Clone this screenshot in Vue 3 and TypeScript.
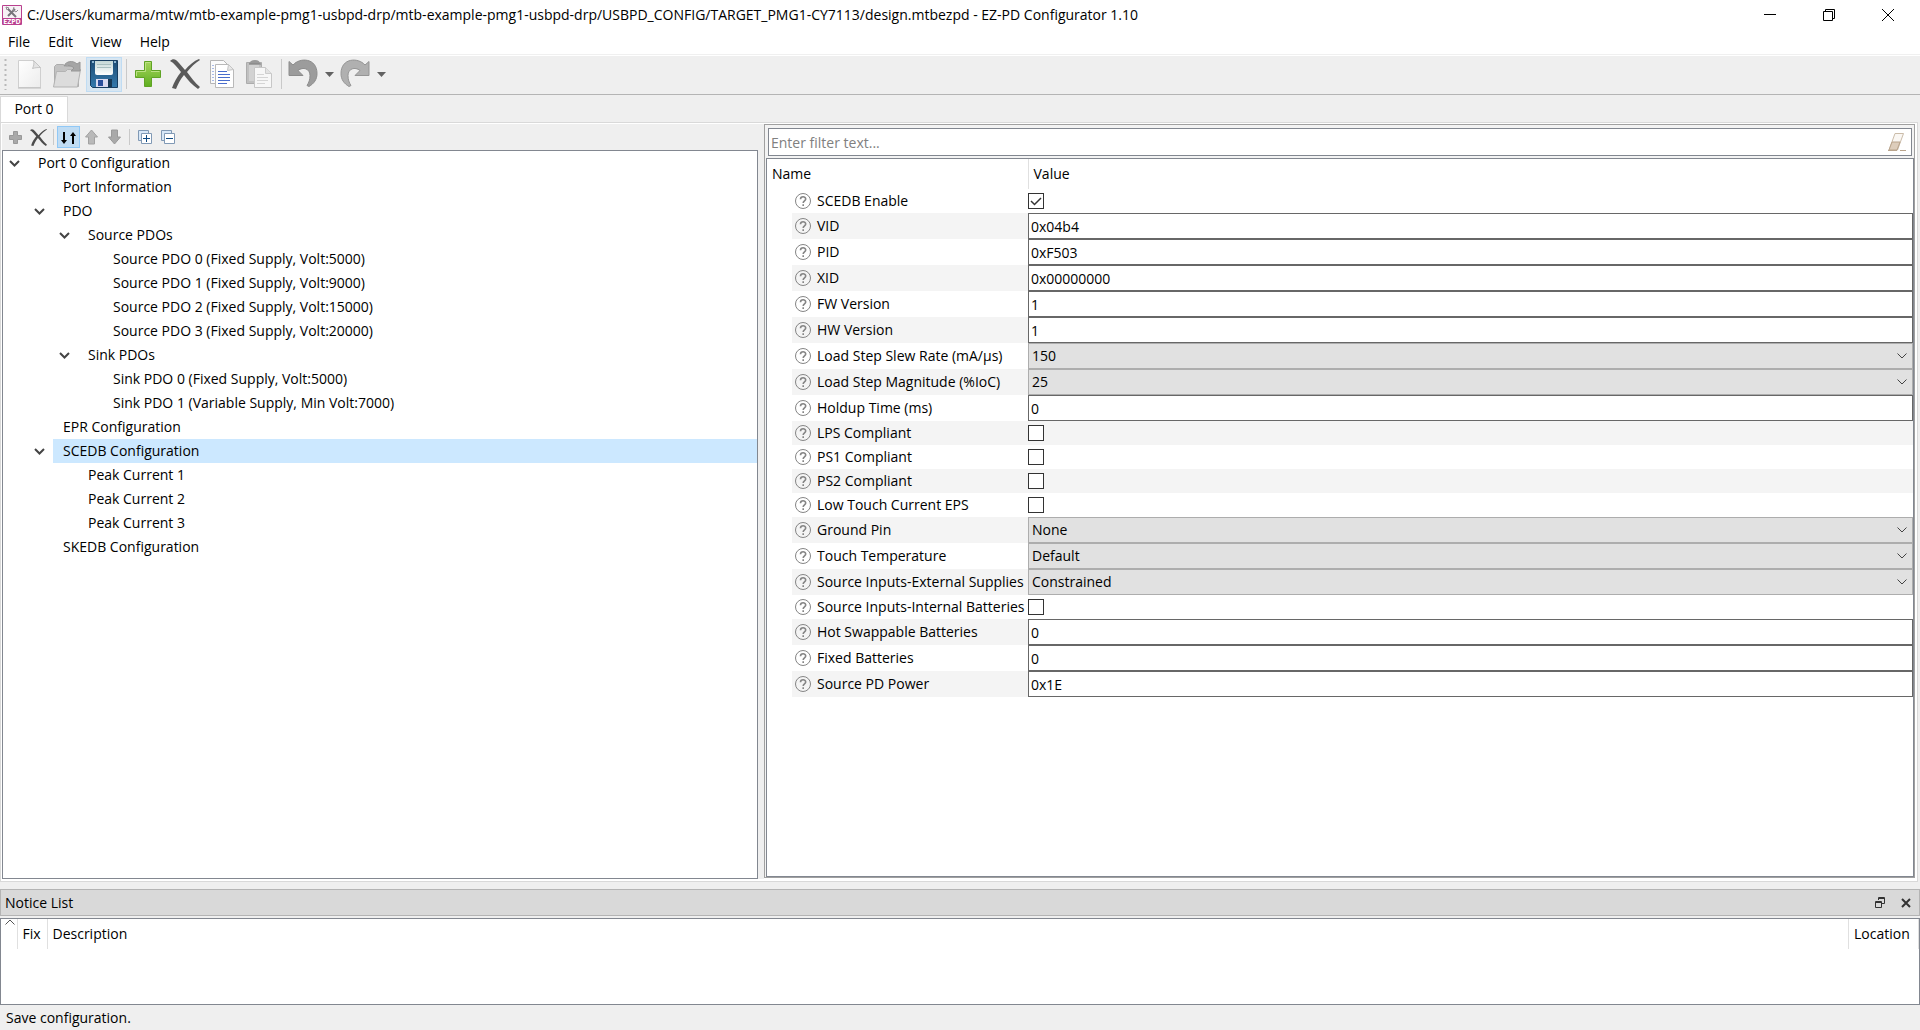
<script setup lang="ts">
import { ref } from 'vue'

interface TreeNode {
  label: string
  level: number
  open?: boolean
}

interface Field {
  id: string
  label: string
  kind: 'text' | 'select' | 'check'
  value: string | boolean
}

const menus = ['File', 'Edit', 'View', 'Help']

const nodes: TreeNode[] = [
  { label: 'Port 0 Configuration', level: 0, open: true },
  { label: 'Port Information', level: 1 },
  { label: 'PDO', level: 1, open: true },
  { label: 'Source PDOs', level: 2, open: true },
  { label: 'Source PDO 0 (Fixed Supply, Volt:5000)', level: 3 },
  { label: 'Source PDO 1 (Fixed Supply, Volt:9000)', level: 3 },
  { label: 'Source PDO 2 (Fixed Supply, Volt:15000)', level: 3 },
  { label: 'Source PDO 3 (Fixed Supply, Volt:20000)', level: 3 },
  { label: 'Sink PDOs', level: 2, open: true },
  { label: 'Sink PDO 0 (Fixed Supply, Volt:5000)', level: 3 },
  { label: 'Sink PDO 1 (Variable Supply, Min Volt:7000)', level: 3 },
  { label: 'EPR Configuration', level: 1 },
  { label: 'SCEDB Configuration', level: 1, open: true },
  { label: 'Peak Current 1', level: 2 },
  { label: 'Peak Current 2', level: 2 },
  { label: 'Peak Current 3', level: 2 },
  { label: 'SKEDB Configuration', level: 1 },
]

const selected = ref('SCEDB Configuration')
const filter = ref('')

const fields = ref<Field[]>([
  { id: 'scedb', label: 'SCEDB Enable', kind: 'check', value: true },
  { id: 'vid', label: 'VID', kind: 'text', value: '0x04b4' },
  { id: 'pid', label: 'PID', kind: 'text', value: '0xF503' },
  { id: 'xid', label: 'XID', kind: 'text', value: '0x00000000' },
  { id: 'fw', label: 'FW Version', kind: 'text', value: '1' },
  { id: 'hw', label: 'HW Version', kind: 'text', value: '1' },
  { id: 'slew', label: 'Load Step Slew Rate (mA/µs)', kind: 'select', value: '150' },
  { id: 'magnitude', label: 'Load Step Magnitude (%IoC)', kind: 'select', value: '25' },
  { id: 'holdup', label: 'Holdup Time (ms)', kind: 'text', value: '0' },
  { id: 'lps', label: 'LPS Compliant', kind: 'check', value: false },
  { id: 'ps1', label: 'PS1 Compliant', kind: 'check', value: false },
  { id: 'ps2', label: 'PS2 Compliant', kind: 'check', value: false },
  { id: 'eps', label: 'Low Touch Current EPS', kind: 'check', value: false },
  { id: 'ground', label: 'Ground Pin', kind: 'select', value: 'None' },
  { id: 'touch', label: 'Touch Temperature', kind: 'select', value: 'Default' },
  { id: 'external', label: 'Source Inputs-External Supplies', kind: 'select', value: 'Constrained' },
  { id: 'internal', label: 'Source Inputs-Internal Batteries', kind: 'check', value: false },
  { id: 'hot', label: 'Hot Swappable Batteries', kind: 'text', value: '0' },
  { id: 'fixed', label: 'Fixed Batteries', kind: 'text', value: '0' },
  { id: 'power', label: 'Source PD Power', kind: 'text', value: '0x1E' },
])
</script>

<template>
  <div class="window">
    <header class="titlebar">
      <svg class="app-icon" width="20" height="20" viewBox="0 0 20 20">
        <rect width="20" height="20" rx="1" fill="#b9408f" />
        <rect x="1" y="1" width="18" height="12" fill="#f7f1f5" />
        <path d="M6 4l8 8M6 11l7-7" stroke="#77747a" stroke-width="2" />
        <path d="M12 2l-1 3 3 2 2-2M4 2l3 1-2 2z" stroke="#8f8c92" fill="none" />
        <text x="10" y="19" text-anchor="middle" class="app-icon-text">EZPD</text>
      </svg>
      <span class="title">C:/Users/kumarma/mtw/mtb-example-pmg1-usbpd-drp/mtb-example-pmg1-usbpd-drp/USBPD_CONFIG/TARGET_PMG1-CY7113/design.mtbezpd - EZ-PD Configurator 1.10</span>
      <div class="window-buttons">
        <button type="button" aria-label="Minimize">
          <svg width="12" height="12"><path d="M0 5.500h12" stroke="#000" /></svg>
        </button>
        <button type="button" aria-label="Restore">
          <svg width="12" height="12" fill="none" stroke="#000"><path d="M.5 2.500h9v9h-9zM2.500 2.500v-2h9v9h-2" /></svg>
        </button>
        <button type="button" aria-label="Close">
          <svg width="12" height="12"><path d="M0 0l12 12M12 0L0 12" stroke="#000" /></svg>
        </button>
      </div>
    </header>

    <nav class="menubar">
      <button v-for="menu in menus" :key="menu" type="button">{{ menu }}</button>
    </nav>

    <div class="toolbar">
      <svg class="handle" width="3" height="32"><path d="M1.500 1v31" stroke="#b9b9b9" stroke-width="2" stroke-dasharray="2 3" /></svg>
      <button type="button" aria-label="New">
        <svg width="28" height="30" viewBox="0 0 28 30">
          <defs><linearGradient id="paper" x2="1" y2="1"><stop stop-color="#fff" /><stop offset="1" stop-color="#ececec" /></linearGradient></defs>
          <path d="M2.500 1.500h15l7 7v20h-22z" fill="url(#paper)" stroke="#cfcfcf" />
          <path d="M17.500 1.500c1 3 0 6-1 8 3-1 6-1 8-1z" fill="#e4e4e4" stroke="#c4c4c4" />
          <path d="M2 29h23" stroke="#bcbcbc" />
        </svg>
      </button>
      <button type="button" aria-label="Open">
        <svg width="30" height="30" viewBox="0 0 30 30">
          <path d="M2.500 27.500v-20l2-2h7l2 2h8v4h5v16z" fill="#c2c2c2" stroke="#acacac" />
          <path d="M1.500 28l3-15.500h9l2-2h13l-3 17.500z" fill="#dcdcdc" stroke="#b3b3b3" />
          <path d="M12 7c2-5 9-6 13-2l3-2v9h-9l3-3c-3-3-7-3-10-2z" fill="#a5a5a5" stroke="#969696" />
        </svg>
      </button>
      <button type="button" class="active" aria-label="Save">
        <svg width="28" height="28" viewBox="0 0 28 28">
          <defs>
            <linearGradient id="disk" x2="0" y2="1"><stop stop-color="#1d4c74" /><stop offset="1" stop-color="#3479ac" /></linearGradient>
            <linearGradient id="disk-label" x2="0" y2="1"><stop stop-color="#c3d7d6" /><stop offset="1" stop-color="#fff" /></linearGradient>
          </defs>
          <path d="M.5.5h27v27h-25l-2-2z" fill="url(#disk)" stroke="#173d60" />
          <path d="M5 1h18v12q0 2-2 2H7q-2 0-2-2z" fill="url(#disk-label)" />
          <path d="M7 4.500h14M7 7.500h14" stroke="#a8bfc0" />
          <path d="M3 1v2M25 1v2" stroke="#8cb5d2" stroke-width="2" />
          <path d="M6 19h13v8H6z" fill="#dadaf0" /><path d="M18 19h4v8h-4z" fill="#183853" />
          <path d="M8 20h5v6H8z" fill="#2b4f9b" />
        </svg>
      </button>
      <span class="sep"></span>
      <button type="button" aria-label="Add">
        <svg width="28" height="28" viewBox="0 0 28 28">
          <defs><linearGradient id="plus" x2="0" y2="1"><stop stop-color="#a4d45b" /><stop offset="1" stop-color="#5fae20" /></linearGradient></defs>
          <path d="M10.500 1.500h7v9h9v7h-9v9h-7v-9h-9v-7h9z" fill="url(#plus)" stroke="#5fa324" stroke-linejoin="round" />
          <path d="M11.500 11.500v-9h5M2.500 16v-4.500h9M17 11.500h8.500" fill="none" stroke="#bce284" />
        </svg>
      </button>
      <button type="button" aria-label="Delete">
        <svg width="30" height="30" viewBox="0 0 30 30"><path d="M0 2c3-3 6-2 9 2l6 7C19 6 24 2 29 0l1 1c-5 3-9 7-13 12 4 5 8 11 13 15l-2 2c-6-4-10-9-14-14-4 5-6 9-8 14L2 29c2-6 5-11 9-16C7 8 4 4 0 2z" fill="#5a5a5a" /></svg>
      </button>
      <button type="button" aria-label="Copy">
        <svg width="26" height="30" viewBox="0 0 26 30">
          <path d="M1.500 1.500h13l4 4v19h-17z" fill="#fbfbfb" stroke="#b5b5b5" />
          <path d="M4 6v17" stroke="#587bd2" stroke-dasharray="1 2" />
          <path d="M6.500 5.500h13l5 5v18h-18z" fill="#fff" stroke="#b9b9b9" /><path d="M19.500 5.500l-1 6 6-1z" fill="#e7e7e7" stroke="#c4c4c4" />
          <path d="M9 12.500h9M9 15.500h12M9 18.500h12M9 21.500h12M9 24.500h9" stroke="#496dcc" />
        </svg>
      </button>
      <button type="button" aria-label="Paste">
        <svg width="28" height="30" viewBox="0 0 28 30">
          <path d="M1.500 3.500h15v21h-15z" fill="#c0c0c0" stroke="#acacac" /><path d="M4 6h10v16H4z" fill="#d2d2d2" />
          <path d="M4 5q1-4 6-4t5 4z" fill="#999" /><path d="M4 5h12" stroke="#808080" />
          <path d="M9.500 8.500h11l6 6v14h-17z" fill="#f7f7f7" stroke="#c7c7c7" /><path d="M20.500 8.500v6h6" fill="#e3e3e3" stroke="#ccc" />
          <path d="M12 15.500h7M12 18.500h11M12 21.500h11M12 24.500h8" stroke="#d5d5d5" />
        </svg>
      </button>
      <span class="sep"></span>
      <button type="button" aria-label="Undo">
        <svg width="30" height="30" viewBox="0 0 30 30"><path d="M1 2.500v14h14l-5-5c5-4 12-2 12 5 0 4-1 7-3 10l2 1c5-3 8-7 8-13C29-1 12-2 5 6z" fill="#9c9c9c" stroke="#8c8c8c" /></svg>
      </button>
      <button type="button" class="drop" aria-label="Undo history"><svg width="9" height="5"><path d="M0 0h9L4.500 5z" fill="#626262" /></svg></button>
      <button type="button" aria-label="Redo">
        <svg width="30" height="30" viewBox="0 0 30 30"><path d="M29 2.500v14H15l5-5c-5-4-12-2-12 5 0 4 1 7 3 10l-2 1c-5-3-8-7-8-13C1-1 18-2 25 6z" fill="#b0b0b0" stroke="#959595" /></svg>
      </button>
      <button type="button" class="drop" aria-label="Redo history"><svg width="9" height="5"><path d="M0 0h9L4.500 5z" fill="#626262" /></svg></button>
    </div>

    <div class="tabs" role="tablist">
      <button type="button" class="tab" role="tab" aria-selected="true">Port 0</button>
    </div>

    <main class="pane">
      <section class="left">
        <div class="mini-toolbar">
          <button type="button" aria-label="Add item"><svg width="15" height="15"><path d="M5.500 1.500h4v4h4v4h-4v4h-4v-4h-4v-4h4z" fill="#a9a9a9" stroke="#999" /></svg></button>
          <button type="button" aria-label="Delete item"><svg width="17" height="17" viewBox="0 0 30 30"><path d="M0 2c3-3 6-2 9 2l6 7C19 6 24 2 29 0l1 1c-5 3-9 7-13 12 4 5 8 11 13 15l-2 2c-6-4-10-9-14-14-4 5-6 9-8 14L2 29c2-6 5-11 9-16C7 8 4 4 0 2z" fill="#4c4c4c" /></svg></button>
          <span class="sep"></span>
          <button type="button" class="pressed" aria-label="Sort"><svg width="17" height="15"><path d="M3 2h2v8h2l-3 4-3-4h2zM12 14h2V6h2l-3-4-3 4h2z" fill="#000" /></svg></button>
          <button type="button" aria-label="Move up"><svg width="15" height="16"><path d="M7.500 1l6 7h-3v7h-6V8h-3z" fill="#b9b9b9" stroke="#a2a2a2" /></svg></button>
          <button type="button" aria-label="Move down"><svg width="15" height="16"><path d="M7.500 15l6-7h-3V1h-6v7h-3z" fill="#a9a9a9" stroke="#9a9a9a" /></svg></button>
          <span class="sep"></span>
          <button type="button" aria-label="Expand all"><svg width="14" height="14" fill="#fff" stroke="#8099b5"><path d="M.5.5h10v10H.5z" fill="#d7e7f7" /><path d="M3.500 3.500h10v10h-10z" /><path d="M5 8.500h7M8.500 5v7" stroke="#0f4a83" /></svg></button>
          <button type="button" aria-label="Collapse all"><svg width="14" height="14" fill="#fff" stroke="#8099b5"><path d="M.5.5h10v10H.5z" fill="#d7e7f7" /><path d="M3.500 3.500h10v10h-10z" /><path d="M5 8.500h7" stroke="#0f4a83" /></svg></button>
        </div>
        <ul class="tree" role="tree">
          <li
            v-for="node in nodes"
            :key="node.label"
            role="treeitem"
            :aria-selected="node.label === selected"
            :style="{ paddingLeft: node.level * 25 + 'px' }"
          >
            <span class="twisty">
              <svg v-if="node.open" width="11" height="7"><path d="M1 1l4.500 4.500L10 1" fill="none" stroke="#444" stroke-width="2" /></svg>
            </span>
            <button type="button" class="node" :class="{ current: node.label === selected }" @click="selected = node.label">{{ node.label }}</button>
          </li>
        </ul>
      </section>

      <section class="right">
        <div class="filter">
          <input v-model="filter" type="text" placeholder="Enter filter text..." aria-label="Filter" />
          <button type="button" aria-label="Clear filter">
            <svg width="20" height="20" viewBox="0 0 20 20">
              <path d="M8 1.500h8.500l-6 16.500H2z" fill="#faf7f3" stroke="#cbbca9" />
              <path d="M5 10h8l-3 8H2z" fill="#ddcdbb" stroke="#b9a48c" />
              <path d="M1 18.500h9M13 18.500h6" stroke="#b9a48c" />
            </svg>
          </button>
        </div>
        <div class="grid">
          <table class="props">
            <thead>
              <tr><th class="name">Name</th><th>Value</th></tr>
            </thead>
            <tbody>
              <tr v-for="field in fields" :key="field.id" :class="field.kind">
                <td class="name">
                  <div class="label-box">
                    <svg width="16" height="16" fill="none" stroke="#858585"><circle cx="8" cy="8" r="7.500" /><path d="M5.500 6.200c0-3.300 5.200-3.200 5.200-.2 0 1.800-2.500 1.800-2.500 3.900M8.200 11.200v1.800" stroke-width="1.600" /></svg>
                    <label :for="field.id">{{ field.label }}</label>
                  </div>
                </td>
                <td class="value">
                  <input v-if="field.kind === 'text'" :id="field.id" v-model="field.value" type="text" />
                  <div v-else-if="field.kind === 'select'" class="combo">
                    <select :id="field.id" v-model="field.value"><option>{{ field.value }}</option></select>
                    <svg width="10" height="6"><path d="M.5.500L5 5 9.500.500" fill="none" stroke="#444" /></svg>
                  </div>
                  <input v-else :id="field.id" v-model="field.value" type="checkbox" />
                </td>
              </tr>
            </tbody>
          </table>
        </div>
      </section>
    </main>

    <section class="notice">
      <div class="notice-title">
        <h2>Notice List</h2>
        <button type="button" aria-label="Float">
          <svg width="10" height="11" fill="none" stroke="#333"><path d="M3.500 3V.500h6v6H7M3 1.500h7" /><path d="M.5 4.500h6v6h-6zM0 5.500h7" /></svg>
        </button>
        <button type="button" aria-label="Close notice list">
          <svg width="10" height="10"><path d="M1 1l8 8M9 1L1 9" stroke="#333" stroke-width="2" /></svg>
        </button>
      </div>
      <div class="notice-body">
        <table class="notices">
          <thead>
            <tr>
              <th class="sort"><svg width="10" height="6"><path d="M.5 5.500L5 1l4.500 4.500" fill="none" stroke="#555" /></svg></th>
              <th class="fix">Fix</th>
              <th>Description</th>
              <th class="location">Location</th>
            </tr>
          </thead>
        </table>
      </div>
    </section>

    <footer class="status">Save configuration.</footer>
  </div>
</template>

<style>
body {
  background: #efefef;
}
</style>

<style scoped>
.window {
  display: flex;
  flex-direction: column;
  min-height: 100vh;
  background: #efefef;
  color: #000;
  font: 14px/24px "Open Sans", "Noto Sans", sans-serif;
}
.window *,
.window {
  box-sizing: border-box;
}
button,
input,
select {
  margin: 0;
  padding: 0;
  border: 0;
  border-radius: 0;
  background: none;
  color: inherit;
  font: inherit;
  outline: 0;
}
svg {
  display: block;
  flex: none;
}
.titlebar {
  display: flex;
  align-items: center;
  height: 29px;
  padding-left: 2px;
  background: #fff;
}
.app-icon-text {
  fill: #fff;
  font-size: 7px;
  font-weight: 700;
}
.title {
  flex: 1;
  min-width: 0;
  margin-left: 5px;
  overflow: hidden;
  white-space: nowrap;
}
.window-buttons {
  display: flex;
  padding-right: 3px;
}
.window-buttons button {
  display: grid;
  place-items: center;
  width: 59px;
  height: 28px;
}
.menubar {
  display: flex;
  gap: 18px;
  height: 27px;
  padding: 1px 8px 0;
  background: linear-gradient(#fff 25px, #f0f0f0 25px, #f0f0f0 26px, #fff 26px);
}
.menubar button {
  height: 24px;
}
.toolbar {
  display: flex;
  align-items: center;
  gap: 1px;
  height: 39px;
  padding: 0 4px 2px;
  border-bottom: 1px solid #b4b4b4;
}
.handle {
  margin-right: 4px;
}
.toolbar button {
  display: grid;
  place-items: center;
  width: 36px;
  height: 35px;
}
.toolbar .active {
  border: 1px solid #c0dcf3;
  background: #d8e6f1;
}
.toolbar .drop {
  width: 14px;
}
.sep {
  width: 1px;
  height: 30px;
  margin: 0 3px;
  background: #c9c9c9;
}
.toolbar .sep {
  margin-right: 2px;
}
.tabs {
  display: flex;
  height: 27px;
  padding-top: 1px;
}
.tab {
  width: 68px;
  padding-bottom: 1px;
  border: 1px solid #d9d9d9;
  border-bottom: 0;
  background: #fff;
}
.pane {
  display: grid;
  flex: 1;
  grid-template-columns: 756fr 6px 1151fr;
  min-height: 600px;
  margin-right: 2px;
  padding: 1px 2px 2px 1px;
  border: 1px solid #d9d9d9;
  background: #fff;
}
.left {
  display: flex;
  flex-direction: column;
  min-width: 0;
}
.mini-toolbar {
  display: flex;
  align-items: center;
  height: 26px;
  padding: 0 2px;
  background: #efefef;
}
.mini-toolbar button {
  display: grid;
  place-items: center;
  width: 23px;
  height: 22px;
}
.mini-toolbar .sep {
  height: 16px;
}
.mini-toolbar .pressed {
  border: 1px solid #90c8f6;
  background: #c0dcf3;
}
.tree {
  flex: 1;
  margin: 0;
  padding: 0;
  border: 1px solid #828790;
  list-style: none;
}
.tree li {
  display: flex;
  align-items: center;
  height: 24px;
}
.twisty {
  width: 25px;
  padding-left: 6px;
}
.node {
  flex: 1;
  height: 24px;
  padding-left: 10px;
  text-align: left;
  white-space: nowrap;
}
.current {
  background: #cce8ff;
}
.right {
  display: flex;
  flex-direction: column;
  grid-column: 3;
  min-width: 0;
  margin-bottom: 1px;
  border: 1px solid #a0a0a0;
  background: #f3f3f3;
}
.pane::before {
  content: "";
  grid-column: 2;
  grid-row: 1;
  background: #efefef;
}
.left,
.right {
  grid-row: 1;
}
.left {
  grid-column: 1;
}
.filter {
  display: flex;
  align-items: center;
  height: 28px;
  margin: 3px 2px 2px 3px;
  padding-right: 4px;
  border: 1px solid #828790;
  background: #fff;
}
.filter input {
  flex: 1;
  height: 26px;
  padding-left: 2px;
}
.filter input::placeholder {
  color: #808080;
  opacity: 1;
}
.grid {
  flex: 1;
  margin-left: 1px;
  border: 1px solid #828790;
  background: #fff;
}
table {
  width: 100%;
  border-collapse: collapse;
  table-layout: fixed;
}
th,
td {
  padding: 0;
  font-weight: 400;
  text-align: left;
}
.props th {
  height: 30px;
  padding-left: 5px;
}
.props .name {
  width: 261px;
}
.props th.name {
  border-right: 1px solid #e0e0e0;
}
.label-box {
  display: flex;
  align-items: center;
  gap: 6px;
  height: 26px;
  margin-left: 25px;
  padding-left: 3px;
  white-space: nowrap;
}
.check .label-box {
  height: 24px;
}
tr:nth-child(even) .label-box,
tr:nth-child(even) .value {
  background: #f4f4f4;
}
.value input[type="text"] {
  display: block;
  width: 100%;
  height: 26px;
  padding: 0 2px;
  border: 1px solid #676767;
  background: #fff;
}
.combo {
  display: grid;
  align-items: center;
}
.combo select {
  grid-area: 1 / 1;
  width: 100%;
  height: 26px;
  padding: 0 3px;
  border: 1px solid #adadad;
  background: #e1e1e1;
  appearance: none;
}
.combo svg {
  grid-area: 1 / 1;
  justify-self: end;
  margin-right: 6px;
  pointer-events: none;
}
.value input[type="checkbox"] {
  display: block;
  width: 16px;
  height: 16px;
  border: 1px solid #333;
  background: #fff;
  appearance: none;
}
.value input[type="checkbox"]:checked {
  background: url("data:image/svg+xml,%3Csvg xmlns='http://www.w3.org/2000/svg' width='14' height='14'%3E%3Cpath d='M2 7l3.500 3.500L12 4' fill='none' stroke='%23333' stroke-width='1.500'/%3E%3C/svg%3E");
}
.notice {
  margin-top: 7px;
}
.notice-title {
  display: flex;
  align-items: center;
  gap: 3px;
  height: 27px;
  padding: 0 2px 0 4px;
  border: 1px solid #b4b4b4;
  background: #d9d9d9;
}
.notice-title h2 {
  flex: 1;
  margin: 0;
  font: inherit;
}
.notice-title button {
  display: grid;
  place-items: center;
  width: 23px;
  height: 23px;
}
.notice-body {
  height: 87px;
  margin-top: 2px;
  border: 1px solid #828790;
  background: #fff;
}
.notices th {
  height: 30px;
  padding-left: 5px;
  border-right: 1px solid #e0e0e0;
}
.notices .sort {
  width: 16px;
  padding-left: 4px;
  vertical-align: top;
}
.notices .fix {
  width: 30px;
}
.notices .location {
  width: 70px;
}
.status {
  height: 25px;
  padding: 2px 6px 0;
  line-height: 22px;
}
</style>
